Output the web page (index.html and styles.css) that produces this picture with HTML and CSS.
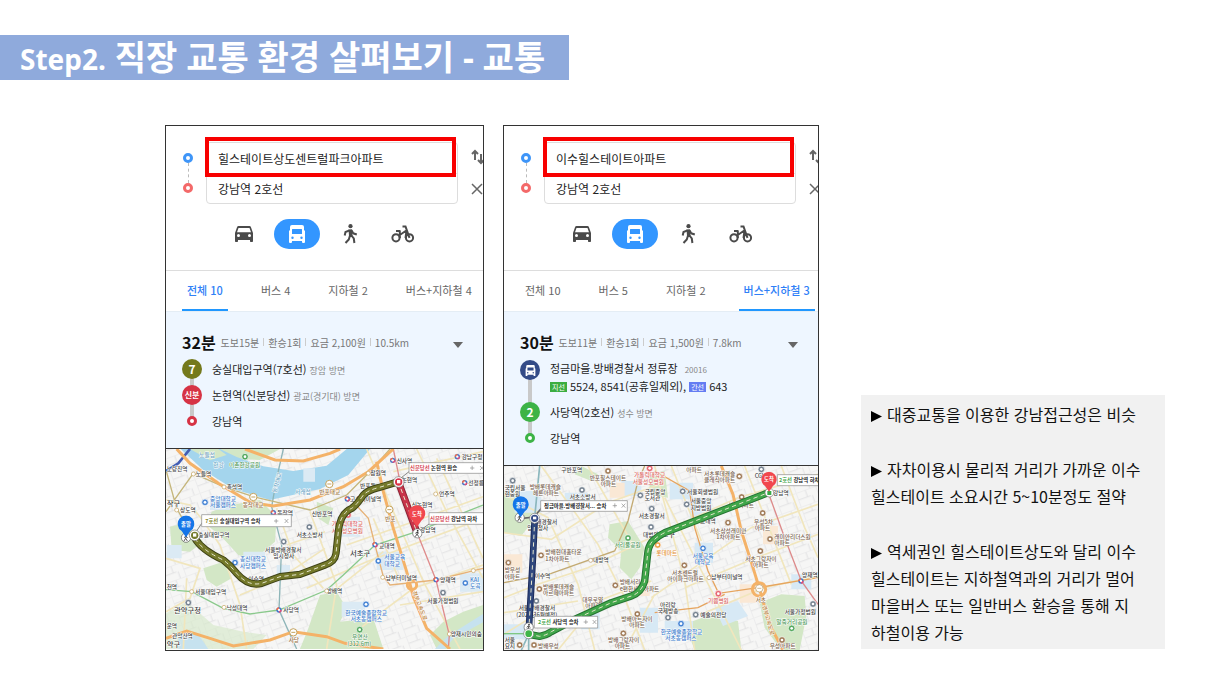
FILE: index.html
```html
<!DOCTYPE html>
<html lang="ko">
<head>
<meta charset="utf-8">
<title>Step2. 직장 교통 환경 살펴보기 - 교통</title>
<meta name="viewport" content="width=device-width, initial-scale=1">
<link rel="stylesheet" href="styles.css">
</head>
<body>
<svg class="defs" width="0" height="0" aria-hidden="true">
  <symbol id="car" viewBox="2 4 20 18"><path fill="currentColor" d="M18.900 6c-.2-.6-.8-1-1.400-1h-11c-.7 0-1.200.4-1.400 1L3 12v8c0 .6.4 1 1 1h1c.6 0 1-.4 1-1v-1h12v1c0 .6.4 1 1 1h1c.6 0 1-.4 1-1v-8zM6.500 16a1.500 1.500 0 1 1 0-3 1.500 1.500 0 0 1 0 3zm11 0a1.500 1.500 0 1 1 0-3 1.500 1.500 0 0 1 0 3zM5 11.300 6.500 7h11l1.500 4.300z"/></symbol>
  <symbol id="bus" viewBox="0 0 18 18"><path fill="currentColor" fill-rule="evenodd" d="M4 0h10q2 0 2 2v3l1 1v11q0 1-1 1h-1q-1 0-1-1v-1H4v1q0 1-1 1H2q-1 0-1-1V6l1-1V2q0-2 2-2zM4.500 4q-.5 0-.5.5V9h10V4.500q0-.5-.5-.5zM4.500 11.500a1.200 1.200 0 1 0 0 2.400 1.200 1.200 0 0 0 0-2.400zM13.500 11.500a1.200 1.200 0 1 0 0 2.400 1.200 1.200 0 0 0 0-2.400z"/></symbol>
  <symbol id="walk" viewBox="0 0 15 20"><circle cx="7.500" cy="2.200" r="2.100" fill="currentColor"/><path fill="currentColor" d="m5.500 5.500 3.500-.2.500 6.700H6z"/><path fill="none" stroke="currentColor" stroke-width="2" d="M6.500 6.300 2.500 8l-.8 3.500M8.500 6.300l1.700 3 3.600 1.200M7 11.500 5.800 15.500 2.500 19M8 11l2.800 3.500.6 4.500"/></symbol>
  <symbol id="bike" viewBox="0 0 24 18"><g fill="none" stroke="currentColor" stroke-width="2"><circle cx="5" cy="12.800" r="3.600"/><circle cx="18.500" cy="12.800" r="3.600"/><path d="M5 6h4.500M8.800 13V6M8.800 10l6.500-4.500M11.500 1.500h3l4 11.300M15.500 6l-1 7"/></g></symbol>
  <symbol id="swap" viewBox="0 0 14 16"><path fill="none" stroke="currentColor" stroke-width="2" d="M4 11V2M1 5l3-3 3 3M10 5v9M7 11l3 3 3-3"/></symbol>
  <symbol id="cross" viewBox="0 0 12 12"><path fill="none" stroke="currentColor" stroke-width="1.500" d="m1 1 10 10M11 1 1 11"/></symbol>
  <symbol id="poi" viewBox="-12 -12 24 24"><circle r="10" fill="currentColor" stroke="#fff" stroke-width="2"/><circle r="4" fill="#fff"/></symbol>
  <symbol id="stn" viewBox="-10 -10 20 20"><circle r="8" fill="#4778c9"/><path d="M0-8A8 8 0 0 0-8 0h8z" fill="#f06a48"/><path d="M0 8A8 8 0 0 0 8 0H0z" fill="#df4b78"/><circle r="3.500" fill="#fff"/></symbol>
  <symbol id="pin" viewBox="-26 -26 52 68"><path fill="currentColor" d="M0 40-13 21A25 25 0 1 1 13 21z"/></symbol>
  <symbol id="person" viewBox="-16 -16 32 32"><circle r="14" fill="#fff" stroke="#555" stroke-width="2"/><circle cx="1" cy="-8" r="2.500" fill="#333"/><path d="m1-5-2 7 5 8M-1 2l-5 8M-6 0l5-4 6 4" stroke="#333" stroke-width="2.500" fill="none"/></symbol>
  <pattern id="streets" width="62" height="44" patternUnits="userSpaceOnUse" patternTransform="rotate(-20)"><path d="M0 1h62M0 23h40M1 0v44M30 0v23M45 23v21" fill="none" stroke="#e2e2e3" stroke-width="3"/><path d="M0 1h62M1 0v44" stroke="#fff" stroke-width="1"/></pattern>
</svg>

<header class="title-bar"><h1><span class="step">Step2.</span> 직장 교통 환경 살펴보기 - 교통</h1></header>

<main class="slide">
  <section class="panel" aria-label="힐스테이트상도센트럴파크아파트 경로">
    <form class="search">
      <div class="ends" aria-hidden="true"><i class="dot start"></i><i class="dash"></i><i class="dot goal"></i></div>
      <div class="fields">
        <input type="text" aria-label="출발지" value="힐스테이트상도센트럴파크아파트">
        <input type="text" aria-label="도착지" value="강남역 2호선">
        <span class="highlight"></span>
      </div>
      <div class="actions">
        <button type="button" aria-label="출발 도착 바꾸기"><svg width="14" height="16"><use href="#swap"/></svg></button>
        <button type="button" aria-label="지우기"><svg width="12" height="12"><use href="#cross"/></svg></button>
      </div>
    </form>
    <div class="modes">
      <button type="button" aria-label="자동차"><svg width="20" height="18"><use href="#car"/></svg></button>
      <button type="button" aria-label="대중교통" class="on"><svg width="18" height="18"><use href="#bus"/></svg></button>
      <button type="button" aria-label="도보"><svg width="15" height="20"><use href="#walk"/></svg></button>
      <button type="button" aria-label="자전거"><svg width="24" height="18"><use href="#bike"/></svg></button>
    </div>
    <nav class="tabs">
      <button type="button" class="on">전체 10</button><button type="button">버스 4</button><button type="button">지하철 2</button><button type="button">버스+지하철 4</button>
    </nav>
    <article class="route">
      <div class="summary">
        <strong>32분</strong><span>도보15분</span><span>환승1회</span><span>요금 2,100원</span><span>10.5km</span>
        <button type="button" class="more" aria-label="상세 보기"></button>
      </div>
      <ol class="stops">
        <li><b class="badge olive">7</b><p>숭실대입구역(7호선) <small>장암 방면</small></p></li>
        <li><b class="badge red line-name">신분</b><p>논현역(신분당선) <small>광교(경기대) 방면</small></p></li>
        <li><b class="badge end red-end"></b><p>강남역</p></li>
      </ol>
    </article>
    <svg class="map" viewBox="18 12 951 600" role="img" aria-label="숭실대입구역에서 강남역까지의 지도">
      <rect x="18" y="12" width="951" height="600" fill="#f6f6f5"/>
      <rect x="18" y="12" width="951" height="600" fill="url(#streets)"/>
      <g class="green">
        <path d="M155 200 210 180 300 165 350 215 345 290 280 345 235 330 180 270 140 240z"/>
        <path d="M30 245 75 235 130 290 90 320 35 315z"/>
        <path d="M130 370 190 350 215 400 170 425 140 405z"/>
        <path d="M18 505 80 470 160 540 250 560 320 570 280 612H18z" opacity=".6"/>
        <path d="M480 450 530 440 560 490 540 530 640 520 670 612H420L445 550z"/>
        <path d="M470 170 520 190 505 240 475 220zM810 570 850 530 910 500 969 480V612H830z"/>
        <path d="M110 12H360L300 45 200 40z"/>
      </g>
      <path class="water" d="M62 12 130 75 220 132 330 165 480 132 565 90 630 12H560L500 62 400 78 310 64 230 36 180 12z"/>
      <path class="green" d="M90 12h85l25 18-50 16z"/>
      <path fill="#c6e2ef" d="M55 575q50-30 65 0l25 37H55zM825 612l40-40 104-65v25l-90 50-25 30z"/>
      <g fill="#dbeaf4"><path d="M150 155h60v40h-60zM250 320h65v45h-65zM20 300h45v40h-45zM650 320h80v55h-80zM545 470h70v45h-70zM900 385h69v55h-69zM350 360h40v40h-40zM530 215h70v60h-70zM430 70h35v40h-35z"/></g>
      <g class="minor">
        <path d="M18 165 90 180 120 215 180 300 240 480 260 612M18 340 120 370 90 460 18 500M350 190 400 330 490 430M380 300 495 260M240 450 360 400 495 310M440 430 620 350 969 220M560 300 760 230 969 155M620 12 700 200 790 410 900 612M770 12 860 200 969 400M700 80 969 20M600 550 760 430 969 360M640 220 720 410M520 440 670 320M830 40 969 340M450 200 530 420 500 612M720 480 969 440M80 400 70 612"/>
      </g>
      <g class="subway-road">
        <path stroke="#8ac98c" d="M18 434 95 440 190 490 270 507 357 495 500 435 550 390 645 300 770 260 969 180"/>
        <path stroke="#8eb5b8" d="M370 12 350 100 335 185 365 300 357 495 410 612"/>
        <path stroke="#c5b67b" d="M18 75 50 190 95 270M18 200 100 85 190 125 280 155 450 195 560 150 625 85 690 12"/>
        <path stroke="#df8c8c" d="M700 12 720 110 770 260 828 405 868 570 865 612"/>
        <path stroke="#e6b277" d="M565 155 625 220 645 300 670 395 690 420 828 405 969 370"/>
        <path stroke="#425cb3" stroke-width="8" d="M90 12 55 55 18 78"/>
      </g>
      <g class="highway">
        <path d="M50 12 90 55 175 115 270 172 340 183 450 165 550 125 625 80 700 12M255 12 345 45 430 48 510 25 540 12M18 580 80 558 150 580 220 603 330 585 400 560 500 575 555 595 670 612M650 50 670 140 700 250 740 380 760 455 800 550 870 612"/>
        <circle cx="756" cy="420" r="14"/>
      </g>
      <g class="labels">
        <text x="118" y="36" fill="#6f9fbd">노들섬</text><text x="160" y="66" fill="#6aa6c6">한강</text><text x="207" y="67" fill="#50995a">이촌한강공원</text>
        <text x="20" y="77">노량진역</text><text x="107" y="93">노들역</text><text x="200" y="132">흑석역</text><text x="60" y="202">상도역</text><text x="405" y="146" fill="#6aa6c6">서래섬</text><text x="248" y="187" fill="#997243">동작대교</text><text x="352" y="211">동작역</text><text x="20" y="183" class="big">작구</text>
        <text x="150" y="167" class="blue">중앙대학교</text><text x="150" y="187" class="blue">서울캠퍼스</text><text x="115" y="277">숭실대입구역</text><text x="410" y="277">서초소방서</text><text x="315" y="320">서울방배경찰서</text><text x="340" y="340">임시청사</text><text x="240" y="349" class="blue">총신대학교</text><text x="240" y="369" class="blue">사당캠퍼스</text><text x="265" y="407">이수역</text>
        <text x="20" y="433">천역</text><text x="105" y="448">서울대입구역</text><text x="42" y="505" class="big">관악구청</text><text x="200" y="494">낙성대역</text><text x="370" y="502">사당역</text><text x="20" y="550">운역</text><text x="36" y="580">관악산역</text><text x="20" y="605" class="big">악구</text><text x="386" y="591" fill="#997243">사당</text>
        <text x="455" y="212">신반포역</text><text x="710" y="55">신사역</text><text x="631" y="91">잠원역</text><text x="905" y="43">강남구청</text><text x="925" y="120">선정릉</text><text x="478" y="148" fill="#997243">반포대교</text><text x="600" y="128">반포동</text><text x="570" y="169">고속터미널역</text><text x="725" y="112">논현역</text><text x="837" y="154">언주역</text><text x="755" y="185">신논현역</text><text x="675" y="227" fill="#997243">반포</text>
        <text x="515" y="242" fill="#db6764">가톨릭대학교</text><text x="515" y="263" fill="#db6764">서울성모병원</text><text x="780" y="260">강남역</text><text x="570" y="333" class="big">서초구</text><text x="657" y="309">교대역</text><text x="673" y="342" class="blue">서울교육</text><text x="673" y="362" class="blue">대학교</text><text x="677" y="404">남부터미널역</text><text x="840" y="412">양재역</text><text x="930" y="410" class="blue">KAI</text><text x="930" y="430" class="blue">도곡</text><text x="500" y="445">방배역</text><text x="802" y="475">서울가정법원</text><text x="556" y="509" class="blue">한국예술종합학교</text><text x="572" y="529" class="blue">서초동캠퍼스</text><text x="576" y="582" fill="#50995a">우면산</text><text x="562" y="603" fill="#50995a">(312.6m)</text><text x="872" y="573">양재시민의숲</text><text x="757" y="440" transform="rotate(69 757 440)" fill="#b67b30">경부고속도로</text><text x="349" y="145" transform="rotate(-75 349 145)" fill="#6aa6c6">동작대교</text>
      </g>
      <g color="#4a87d5"><use href="#poi" x="123" y="160" width="24" height="24"/><use href="#poi" x="213" y="341" width="24" height="24"/><use href="#poi" x="643" y="336" width="24" height="24"/><use href="#poi" x="606" y="466" width="24" height="24"/><use href="#poi" x="904" y="402" width="24" height="24"/></g>
      <g color="#768391"><use href="#poi" x="436" y="234" width="24" height="24"/><use href="#poi" x="359" y="278" width="24" height="24"/><use href="#poi" x="837" y="431" width="24" height="24"/><use href="#poi" x="73" y="461" width="24" height="24"/></g>
      <g color="#56a960"><use href="#poi" x="243" y="23" width="24" height="24"/><use href="#poi" x="587" y="542" width="24" height="24"/></g>
      <g color="#e76772"><use href="#poi" x="552" y="198" width="24" height="24"/></g>
      <g><use href="#stn" x="330" y="193" width="20" height="20"/><use href="#stn" x="347" y="485" width="20" height="20"/><use href="#stn" x="688" y="36" width="20" height="20"/><use href="#stn" x="882" y="25" width="20" height="20"/><use href="#stn" x="904" y="103" width="20" height="20"/><use href="#stn" x="552" y="152" width="20" height="20"/><use href="#stn" x="635" y="289" width="20" height="20"/><use href="#stn" x="818" y="394" width="20" height="20"/></g>
      <g fill="#fff" stroke="#c4a35e" stroke-width="2"><circle cx="100" cy="87" r="6"/><circle cx="192" cy="126" r="6"/><circle cx="50" cy="195" r="6"/><circle cx="625" cy="85" r="6"/><circle cx="827" cy="147" r="6"/><circle cx="668" cy="397" r="6"/><circle cx="868" cy="567" r="6"/><circle cx="940" cy="377" r="6"/><circle cx="95" cy="440" r="6"/><circle cx="192" cy="487" r="6"/><circle cx="500" cy="438" r="6"/></g>
      <g fill="#fff" stroke="#c4a35e" stroke-width="3"><circle cx="688" cy="194" r="11"/><circle cx="508" cy="117" r="11"/><circle cx="400" cy="562" r="11"/><circle cx="280" cy="156" r="11"/><path d="M682 194h12M502 117h12M394 562h12M274 156h12"/></g>
      <path class="trace" stroke="#3e4217" stroke-width="22" d="M105 280Q125 315 190 345 210 360 230 385 265 425 305 415L360 395 420 388 495 360Q525 350 528 325L535 260Q540 205 575 190 590 180 610 150 625 135 655 128L715 110"/>
      <path class="trace" stroke="#74792a" stroke-width="16" d="M105 280Q125 315 190 345 210 360 230 385 265 425 305 415L360 395 420 388 495 360Q525 350 528 325L535 260Q540 205 575 190 590 180 610 150 625 135 655 128L715 110"/>
      <path class="trace-dash" d="M105 280Q125 315 190 345 210 360 230 385 265 425 305 415L360 395 420 388 495 360Q525 350 528 325L535 260Q540 205 575 190 590 180 610 150 625 135 655 128L715 110"/>
      <path class="trace" stroke="#8c2636" stroke-width="22" d="m715 110 55 150"/><path class="trace" stroke="#c93349" stroke-width="16" d="m715 110 55 150"/><path class="trace-dash" d="m715 110 55 150"/>
      <path d="M105 265 130 228M715 105l32-25M775 260l35-25" stroke="#888" stroke-width="3"/>
      <use href="#person" x="62" y="262" width="32" height="32"/>
      <circle cx="104" cy="271" r="16" fill="#fff" stroke="#777" stroke-width="2"/><circle cx="104" cy="271" r="11" fill="#74792a"/><path d="M99 265h10v10H99z" fill="#fff"/>
      <circle cx="716" cy="111" r="16" fill="#fff" stroke="#777" stroke-width="2"/><circle cx="716" cy="111" r="11" fill="#d93448"/><path d="M711 105h10v10h-10z" fill="#fff"/>
      <use href="#person" x="756" y="249" width="32" height="32"/>
      <use href="#pin" x="52" y="211" width="52" height="68" color="#1475e8"/><text class="pin-name" x="78" y="244">출발</text>
      <use href="#pin" x="745" y="180" width="52" height="68" color="#f1474e"/><text class="pin-name" x="771" y="213">도착</text>
      <g class="bubble"><path d="M125 209h269v36H125zM747 53h240v32H747zM807 203h180v35H807z"/>
        <text x="136" y="233"><tspan fill="#82852c">7호선</tspan> 숭실대입구역 승차</text><path d="M342 228h13M348.500 222v13M374 222l11 12M385 222l-11 12"/>
        <text x="750" y="76"><tspan fill="#d54352">신분당선</tspan> 논현역 환승</text><path d="M930 69h13M936.500 62v13M960 63l11 12M971 63l-11 12"/>
        <text x="810" y="227"><tspan fill="#d54352">신분당선</tspan> 강남역 하차</text></g>
    </svg>
  </section>

  <section class="panel" aria-label="이수힐스테이트아파트 경로">
    <form class="search">
      <div class="ends" aria-hidden="true"><i class="dot start"></i><i class="dash"></i><i class="dot goal"></i></div>
      <div class="fields">
        <input type="text" aria-label="출발지" value="이수힐스테이트아파트">
        <input type="text" aria-label="도착지" value="강남역 2호선">
        <span class="highlight"></span>
      </div>
      <div class="actions">
        <button type="button" aria-label="출발 도착 바꾸기"><svg width="14" height="16"><use href="#swap"/></svg></button>
        <button type="button" aria-label="지우기"><svg width="12" height="12"><use href="#cross"/></svg></button>
      </div>
    </form>
    <div class="modes">
      <button type="button" aria-label="자동차"><svg width="20" height="18"><use href="#car"/></svg></button>
      <button type="button" aria-label="대중교통" class="on"><svg width="18" height="18"><use href="#bus"/></svg></button>
      <button type="button" aria-label="도보"><svg width="15" height="20"><use href="#walk"/></svg></button>
      <button type="button" aria-label="자전거"><svg width="24" height="18"><use href="#bike"/></svg></button>
    </div>
    <nav class="tabs">
      <button type="button">전체 10</button><button type="button">버스 5</button><button type="button">지하철 2</button><button type="button" class="on">버스+지하철 3</button>
    </nav>
    <article class="route">
      <div class="summary">
        <strong>30분</strong><span>도보11분</span><span>환승1회</span><span>요금 1,500원</span><span>7.8km</span>
        <button type="button" class="more" aria-label="상세 보기"></button>
      </div>
      <ol class="stops">
        <li class="with-buses"><b class="badge navy"><svg width="11" height="11"><use href="#bus"/></svg></b><div><p>정금마을.방배경찰서 정류장 <small class="stop-id">20016</small></p><p class="buses"><em class="branch">지선</em> 5524, 8541(공휴일제외), <em class="trunk">간선</em> 643</p></div></li>
        <li><b class="badge green-line">2</b><p>사당역(2호선) <small>성수 방면</small></p></li>
        <li><b class="badge end green-end"></b><p>강남역</p></li>
      </ol>
    </article>
    <svg class="map" viewBox="18 15 942 552" role="img" aria-label="방배경찰서에서 강남역까지의 지도">
      <rect x="18" y="15" width="942" height="552" fill="#f6f6f5"/>
      <rect x="18" y="15" width="942" height="552" fill="url(#streets)"/>
      <g class="green"><path d="M18 90 75 110 115 165 70 225 18 215zM335 190 390 180 440 260 425 320 400 355 365 320 370 270 330 230zM250 15 300 40 280 60 230 40zM455 40 500 30 510 110 455 100zM785 425 850 400 920 405 925 465 905 567H850L800 500zM560 490 640 460 720 480 730 567H590z"/></g>
      <g fill="#d7e9f5"><path d="M50 90h80v65H50zM515 65h70v50h-70zM575 110h65v70h-65zM370 60h60v45h-60zM200 95h70v40h-70zM590 245h55v60h-55zM650 440l70-20 30 45-75 30zM500 480h85v50h-85zM250 455h55v50h-55zM425 440h55v75h-55zM18 490h65v45H18zM880 340h60v45h-60z"/></g>
      <g fill="#fae8d5"><path d="M335 65h45v45h-45zM18 280h55v55H18zM410 355h45v50h-45zM725 370h50v55h-50zM795 195h45v55h-45z"/></g>
      <g class="minor"><path d="M18 215 160 235 330 125 500 65M18 410 120 370 270 320 500 210 720 110 960 40M130 15 300 250 380 410 440 567M270 15 410 260M18 100 150 170 240 370 290 567M470 15 560 360 590 567M500 110 730 567M560 380 750 300 960 220M520 15 610 240M460 410 760 200 960 130M740 15 880 370M850 15 920 200 960 290M610 460 800 380 960 345M180 567 300 420 460 360M380 567 470 400M18 455 240 420M18 520 90 475"/></g>
      <g class="subway-road"><path stroke="#8bb7bd" stroke-width="5" d="M125 15 110 170 92 520V567M92 520 70 567"/><path stroke="#c3aa72" d="M18 365 160 337 350 270 390 180 420 60 440 15"/><path stroke="#dd8b8b" d="M811 95 860 230 910 360 960 430"/><path stroke="#7fc784" d="M18 518H92"/><path stroke="#e6a45e" d="M470 30 575 90 590 200 630 330 662 397 780 380 960 350M470 455 600 440 680 400"/></g>
      <g class="highway"><path d="M670 15 705 100 730 210 765 320 785 385 815 490 855 567"/><circle cx="783" cy="385" r="20"/></g>
      <g class="labels">
        <text x="190" y="33">구반포역</text><text x="275" y="57" class="brown">반포힐스테이트</text><text x="308" y="76" class="brown">아파트</text><text x="408" y="49" fill="#db6764">가톨릭대학교</text><text x="404" y="68" fill="#db6764">서울성모병원</text><text x="20" y="86">국립서울</text><text x="20" y="105">현충원</text><text x="95" y="84" class="brown">방배롯데캐슬</text><text x="105" y="103" class="brown">헤론아파트</text><text x="215" y="113">서초소방서</text><text x="440" y="98">국립중앙</text><text x="440" y="117">도서관</text><text x="422" y="171">서초경찰서</text><text x="115" y="189">배경찰서</text><text x="88" y="208">임시청사</text><text x="435" y="227">대법원</text><text x="350" y="259" fill="#50995a">서리풀공원</text><text x="142" y="280" class="brown">방배현대홈타운</text><text x="142" y="299" class="brown">1차아파트</text><text x="285" y="304">내방역</text><text x="20" y="334" class="brown">방우성</text><text x="20" y="353" class="brown">아파트</text><text x="110" y="352">이수역</text><text x="135" y="383" class="brown">방배롯데캐슬</text><text x="135" y="402" class="brown">아르떼아파트</text><text x="365" y="370" class="brown">방배서리</text><text x="365" y="389" class="brown">e편한세상아파트</text><text x="253" y="422" class="brown">대우로얄</text><text x="262" y="441" class="brown">아파트</text><text x="62" y="448">서울방배경찰서</text><text x="55" y="468">(2025년6월예정)</text><text x="370" y="480" class="brown">방배아트자이</text><text x="394" y="499" class="brown">아파트</text><text x="330" y="542" class="brown">방배그랑자이</text><text x="350" y="562" class="brown">아파트</text><text x="120" y="560" class="brown">방배우성</text><text x="20" y="542">서울</text><text x="20" y="562">요지</text><text x="486" y="438">아리랑</text><text x="479" y="456">국제방송</text>
        <text x="565" y="32" class="brown">아파트</text><text x="618" y="44" class="brown">서초롯데캐슬</text><text x="618" y="62" class="brown">클래식아파트</text><text x="770" y="51">CGV</text><text x="567" y="99">서울회생법원</text><text x="578" y="127">서울중앙</text><text x="578" y="146">지방법원</text><text x="690" y="137" class="brown">서초아파트</text><text x="825" y="102">강남역</text><text x="606" y="185">교대역</text><text x="470" y="228" class="big">서초구</text><text x="636" y="216" class="brown">서초삼성래미안</text><text x="655" y="235" class="brown">1차아파트</text><text x="768" y="188" class="brown">우성5차</text><text x="770" y="207" class="brown">아파트</text><text x="829" y="233" class="brown">래미안리더스원</text><text x="829" y="251" class="brown">아파트</text><text x="584" y="291" class="blue">서울교육</text><text x="590" y="310" class="blue">대학교</text><text x="742" y="300" class="brown">서초그랑자이</text><text x="765" y="319" class="brown">아파트</text><text x="522" y="343" class="brown">서초센트럴</text><text x="508" y="361" class="brown">아이파크아파트</text><text x="640" y="355">남부터미널역</text><text x="912" y="348">양재역</text><text x="773" y="422" fill="#997243">서초</text><text x="630" y="427" fill="#db6764">기쁨병원</text><text x="607" y="469">예술의전당</text><text x="860" y="460">서울가정법원</text><text x="835" y="488" fill="#50995a">말죽거리공원</text><text x="488" y="518" class="blue">한국예술종합학교</text><text x="502" y="537" class="blue">서초동캠퍼스</text><text x="815" y="562" class="brown">우성아파트</text><text x="792" y="434" transform="rotate(74 792 434)" fill="#b67b30">경부고속도로</text><text x="475" y="281" fill="#e49440">롯데마트</text>
      </g>
      <g color="#a17c59"><use href="#poi" x="318" y="18" width="24" height="24"/><use href="#poi" x="117" y="271" width="24" height="24"/><use href="#poi" x="19" y="293" width="24" height="24"/><use href="#poi" x="112" y="372" width="24" height="24"/><use href="#poi" x="340" y="361" width="24" height="24"/><use href="#poi" x="406" y="447" width="24" height="24"/><use href="#poi" x="364" y="505" width="24" height="24"/><use href="#poi" x="96" y="540" width="24" height="24"/><use href="#poi" x="53" y="540" width="24" height="24"/><use href="#poi" x="712" y="34" width="24" height="24"/><use href="#poi" x="719" y="96" width="24" height="24"/><use href="#poi" x="678" y="173" width="24" height="24"/><use href="#poi" x="782" y="144" width="24" height="24"/><use href="#poi" x="804" y="222" width="24" height="24"/><use href="#poi" x="775" y="258" width="24" height="24"/><use href="#poi" x="547" y="301" width="24" height="24"/><use href="#poi" x="840" y="525" width="24" height="24"/></g>
      <g color="#768391"><use href="#poi" x="32" y="47" width="24" height="24"/><use href="#poi" x="240" y="75" width="24" height="24"/><use href="#poi" x="415" y="91" width="24" height="24"/><use href="#poi" x="449" y="131" width="24" height="24"/><use href="#poi" x="447" y="186" width="24" height="24"/><use href="#poi" x="103" y="408" width="24" height="24"/><use href="#poi" x="542" y="79" width="24" height="24"/><use href="#poi" x="554" y="118" width="24" height="24"/><use href="#poi" x="778" y="13" width="24" height="24"/><use href="#poi" x="581" y="449" width="24" height="24"/><use href="#poi" x="498" y="458" width="24" height="24"/><use href="#poi" x="933" y="417" width="24" height="24"/></g>
      <g color="#4a87d5"><use href="#poi" x="603" y="250" width="24" height="24"/><use href="#poi" x="537" y="476" width="24" height="24"/></g>
      <g color="#56a960"><use href="#poi" x="378" y="219" width="24" height="24"/><use href="#poi" x="869" y="490" width="24" height="24"/></g>
      <g color="#e76772"><use href="#poi" x="443" y="10" width="24" height="24"/><use href="#poi" x="649" y="386" width="24" height="24"/></g>
      <g color="#efa14c"><use href="#poi" x="467" y="240" width="24" height="24"/></g>
      <use href="#stn" x="899" y="350" width="20" height="20"/>
      <g fill="#fff" stroke="#b79a65" stroke-width="2"><circle cx="278" cy="298" r="6"/><circle cx="784" cy="382" r="11"/><path d="M778 382h12"/><circle cx="633" cy="350" r="6"/></g>
      <path class="trace" stroke="#1d2c5c" stroke-width="20" d="m110 175-5 110-13 230"/><path class="trace" stroke="#30487e" stroke-width="14" d="m110 175-5 110-13 230"/><path class="trace-dash" d="m110 175-5 110-13 230"/>
      <path class="trace" stroke="#247331" stroke-width="22" d="M92 520 125 526Q145 523 160 512L230 475 340 425 400 405Q430 395 440 360L450 270Q455 245 470 235 480 225 500 215L811 95"/>
      <path class="trace" stroke="#41a64a" stroke-width="16" d="M92 520 125 526Q145 523 160 512L230 475 340 425 400 405Q430 395 440 360L450 270Q455 245 470 235 480 225 500 215L811 95"/>
      <path class="trace-dash" d="M92 520 125 526Q145 523 160 512L230 475 340 425 400 405Q430 395 440 360L450 270Q455 245 470 235 480 225 500 215L811 95"/>
      <path d="m65 173 45-5M110 165l22-25" stroke="#666" stroke-width="5"/>
      <use href="#person" x="49" y="154" width="32" height="32"/><circle cx="110" cy="172" r="15" fill="#fff" stroke="#777" stroke-width="2"/><circle cx="110" cy="172" r="11" fill="#354c87"/><path d="M105 167h10v8h-10z" fill="#fff"/>
      <use href="#person" x="76" y="483" width="32" height="32"/><circle cx="92" cy="518" r="15" fill="#fff" stroke="#777" stroke-width="2"/><circle cx="92" cy="518" r="10" fill="#40b549"/>
      <circle cx="814" cy="95" r="13" fill="#fff" stroke="#777" stroke-width="2"/><path d="M808 90h12v12h-12z" fill="#39a947"/>
      <use href="#pin" x="43" y="105" width="50" height="66" color="#1475e8"/><text class="pin-name" x="68" y="137">출발</text>
      <use href="#pin" x="787" y="32" width="52" height="62" color="#f1474e"/><text class="pin-name" x="813" y="61">도착</text>
      <g class="bubble"><path d="M128 119h260v32H128zM109 466h190v35H109zM838 41h145v33H838z"/>
        <text x="138" y="142">정금마을.방배경찰서... 승차</text><path d="M344 134h13M350.500 127v13M371 128l11 12M382 128l-11 12"/>
        <text x="120" y="490"><tspan fill="#46a64c">2호선</tspan> 사당역 승차</text><path d="M257 483h13M263.500 476v13M284 477l11 12M295 477l-11 12"/>
        <text x="843" y="64"><tspan fill="#46a64c">2호선</tspan> 강남역 하차</text></g>
    </svg>
  </section>

  <aside class="note">
    <p><span class="arrow"></span>대중교통을 이용한 강남접근성은 비슷</p>
    <p><span class="arrow"></span>자차이용시 물리적 거리가 가까운 이수<br>힐스테이트 소요시간 5~10분정도 절약</p>
    <p><span class="arrow"></span>역세권인 힐스테이트상도와 달리 이수<br>힐스테이트는 지하철역과의 거리가 멀어<br>마을버스 또는 일반버스 환승을 통해 지<br>하철이용 가능</p>
  </aside>
</main>
</body>
</html>
```
FILE: styles.css
```css
* { box-sizing: border-box; }
body {
  margin: 0;
  padding-top: 35px;
  background: #fff;
  color: #222;
  font-family: "Noto Sans CJK KR", sans-serif;
}
h1, p, ol { margin: 0; padding: 0; }
button { margin: 0; padding: 0; border: 0; background: none; color: inherit; font: inherit; }
svg { display: block; }
.defs { position: absolute; }

.title-bar {
  width: max-content;
  padding: 0 24px 0 20px;
  background: #8faadc;
  color: #fff;
}
.title-bar h1 {
  font-family: "Noto Sans", "Noto Sans CJK KR", sans-serif;
  font-size: 34px;
  font-weight: 700;
  line-height: 45px;
  white-space: nowrap;
}
.step { font-size: 28px; line-height: 1; }

.slide {
  display: grid;
  grid-template-columns: 319fr 316fr 327fr;
  gap: 19px;
  padding: 45px 51px 30px 165px;
}

.panel {
  display: flex;
  flex-direction: column;
  border: 1px solid #333;
  overflow: hidden;
}
.search {
  display: flex;
  min-width: 317px;
  padding: 16px 0 0 17px;
}
.ends {
  display: flex;
  flex-direction: column;
  align-items: center;
  width: 10px;
  margin-right: 13px;
  padding-top: 11px;
}
.dot { width: 10px; height: 10px; border: 3px solid #3e95f8; border-radius: 50%; background: #fff; }
.dot.goal { border-color: #f36969; }
.dash { height: 20px; border-left: 1px dashed #bbb; }
.fields {
  position: relative;
  flex: 1;
  border: 1px solid #ddd;
  border-radius: 4px;
}
.fields input {
  display: block;
  width: 100%;
  height: 30px;
  padding: 0 11px;
  border: 0;
  background: none;
  color: #222;
  font: 12px "Noto Sans CJK KR", sans-serif;
  outline: 0;
}
.fields input + input { border-top: 1px solid #e5e5e5; }
.highlight {
  position: absolute;
  inset: -6px 1px 26px -2px;
  border: 4px solid #f80000;
}
.actions {
  display: flex;
  flex-direction: column;
  gap: 18px;
  width: 25px;
  padding: 7px 0 0 13px;
  color: #666;
}
.modes {
  display: flex;
  gap: 7px;
  padding: 15px 0 21px 55px;
  border-bottom: 1px solid #ddd;
  min-width: 317px;
  color: #4a4a4a;
}
.modes button {
  display: grid;
  place-items: center;
  width: 46px;
  height: 30px;
  border-radius: 15px;
}
.modes .on { background: #3396ff; color: #fff; }
.tabs {
  display: flex;
  gap: 28px;
  min-width: 317px;
  padding-left: 16px;
  color: #666;
  font-size: 11px;
}
.tabs button {
  height: 40px;
  padding: 0 5px;
  border-bottom: 2px solid transparent;
  white-space: nowrap;
}
.tabs .on { border-color: #2097ff; color: #2f80f7; font-weight: 500; }

.route {
  padding: 18px 16px 14px;
  border-top: 1px solid #e4edf5;
  border-bottom: 1px solid #333;
  background: #eef6ff;
  font-size: 11px;
}
.summary {
  display: flex;
  align-items: center;
  height: 24px;
  margin-bottom: 2px;
  color: #777;
  font-size: 10px;
  white-space: nowrap;
}
.summary strong { margin-right: 5px; color: #111; font-size: 16px; }
.summary span + span { margin-left: 4px; padding-left: 5px; background: linear-gradient(#ccc, #ccc) left center / 1px 8px no-repeat; }
.more {
  width: 10px;
  height: 6px;
  margin: 6px 4px 0 auto;
  background: #666;
  clip-path: polygon(0 0, 100% 0, 50% 100%);
}
.stops { list-style: none; }
.stops li {
  position: relative;
  display: flex;
  align-items: center;
  gap: 10px;
  min-height: 26px;
  white-space: nowrap;
}
.stops li:not(:last-child)::before {
  content: "";
  position: absolute;
  top: 13px;
  bottom: -13px;
  left: 8px;
  width: 4px;
  background: #c9c9c9;
}
.stops small { color: #888; font-size: 9px; }
.stops .stop-id { margin-left: 4px; font-size: 8px; }
.stops .with-buses { align-items: flex-start; min-height: 43px; line-height: 17px; padding-top: 4px; }
.badge {
  position: relative;
  display: grid;
  place-items: center;
  flex: none;
  width: 20px;
  height: 20px;
  border-radius: 50%;
  color: #fff;
  font-size: 12px;
  line-height: 20px;
}
.line-name { font-size: 8px; }
.olive { background: #74791c; }
.red { background: #d63345; }
.navy { background: #334b87; }
.green-line { background: #3db346; }
.end { width: 10px; height: 10px; margin: 0 5px; border: 3px solid; background: #fff; }
.red-end { border-color: #d63345; }
.green-end { border-color: #3db346; }
.buses em {
  display: inline-block;
  padding: 0 2px;
  color: #fff;
  font-size: 7px;
  font-style: normal;
  line-height: 10px;
  vertical-align: 1px;
}
.branch { background: #3bad41; }
.trunk { background: #647cf2; }

.map { width: 100%; height: auto; font-family: "Noto Sans CJK KR", sans-serif; }
.map .green { fill: #d3e7c6; }
.water { fill: #a4d5ed; }
.minor { fill: none; stroke: #f1e6bd; stroke-width: 5; }
.subway-road { fill: none; stroke-width: 4; }
.highway { fill: none; stroke: #f4b268; stroke-width: 9; }
.trace { fill: none; stroke-linecap: round; stroke-linejoin: round; }
.trace-dash { fill: none; stroke: #e5e5cc; stroke-width: 3; stroke-dasharray: 13 10; }
.labels { fill: #444; font-size: 17px; font-weight: 500; stroke: #fff; stroke-width: 3; stroke-linejoin: round; paint-order: stroke; }
.labels .big { font-size: 22px; }
.labels .blue { fill: #397acb; }
.labels .brown { fill: #76604d; }
.pin-name { fill: #fff; font-size: 16px; font-weight: 700; text-anchor: middle; }
.bubble path { fill: #fff; stroke: #888; stroke-width: 2; }
.bubble text { fill: #222; font-size: 16px; font-weight: 700; }

.note {
  align-self: end;
  margin: 0 0 2px 23px;
  padding: 6px 10px 3px;
  background: #f1f1f1;
  color: #111;
  font-size: 16px;
  line-height: 27px;
  white-space: nowrap;
}
.note p + p { margin-top: 28px; }
.arrow {
  display: inline-block;
  width: 11px;
  height: 11px;
  margin-right: 5px;
  background: #000;
  clip-path: polygon(0 0, 100% 50%, 0 100%);
  vertical-align: -1px;
}
```
